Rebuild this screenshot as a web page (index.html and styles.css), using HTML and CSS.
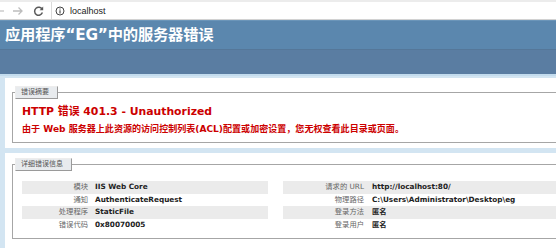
FILE: index.html
```html
<!DOCTYPE html>
<html lang="zh-CN">
<head>
<meta charset="utf-8">
<title>IIS 7.5 详细错误 - 401.3 - Unauthorized</title>
<link rel="stylesheet" href="styles.css">
</head>
<body>
<div class="page">
  <div class="chrome">
    <svg class="ico back" width="8" height="14" viewBox="0 0 8 14"><path d="M0 7h6" stroke="#c4c4c4" stroke-width="1.3" fill="none"/></svg>
    <svg class="ico fwd" width="12" height="14" viewBox="0 0 12 14"><path d="M1 7h9M6.5 3.5 10 7l-3.5 3.5" stroke="#bdbdbd" stroke-width="1.3" fill="none"/></svg>
    <svg class="ico reload" width="11" height="14" viewBox="0 0 11 14"><path d="M9.2 5.4A4 4 0 1 0 9.4 8.6" stroke="#5a5a5a" stroke-width="1.5" fill="none"/><path d="M10.2 2.6v3.6H6.6z" fill="#5a5a5a"/></svg>
    <div class="omnibox">
      <svg class="ico info" width="10" height="10" viewBox="0 0 10 10"><circle cx="5" cy="5" r="4" stroke="#444" stroke-width="1" fill="none"/><path d="M5 4.2v3.2M5 2.6v.9" stroke="#444" stroke-width="1.1"/></svg>
      <span class="url">localhost</span>
    </div>
  </div>

  <div class="header"><h1>应用程序“EG”中的服务器错误</h1></div>
  <div class="server-version"></div>

  <div class="content">
    <div class="container">
      <fieldset>
        <legend>错误摘要</legend>
        <h2>HTTP 错误 401.3 - Unauthorized</h2>
        <h3>由于 Web 服务器上此资源的访问控制列表(ACL)配置或加密设置，您无权查看此目录或页面。</h3>
      </fieldset>
    </div>
    <div class="container">
      <fieldset>
        <legend>详细错误信息</legend>
        <div class="details">
          <table class="left">
            <tr class="alt"><th>模块</th><td>IIS Web Core</td></tr>
            <tr><th>通知</th><td>AuthenticateRequest</td></tr>
            <tr class="alt"><th>处理程序</th><td>StaticFile</td></tr>
            <tr><th>错误代码</th><td>0x80070005</td></tr>
          </table>
          <table class="right">
            <tr class="alt"><th>请求的 URL</th><td>http://localhost:80/</td></tr>
            <tr><th>物理路径</th><td>C:\Users\Administrator\Desktop\eg</td></tr>
            <tr class="alt"><th>登录方法</th><td>匿名</td></tr>
            <tr><th>登录用户</th><td>匿名</td></tr>
          </table>
        </div>
      </fieldset>
    </div>
  </div>
</div>
</body>
</html>
```

FILE: styles.css
```css
html {
  background: #ffffff;
}
body {
  margin: 0;
  width: 556px;
  height: 248px;
  overflow: hidden;
  font-family: "DejaVu Sans", "Noto Sans CJK SC", sans-serif;
}
.page {
  background: #d3e5f2;
  height: 248px;
}

/* browser chrome */
.chrome {
  height: 17px;
  background: #ffffff;
  border-top: 2px solid #ececec;
  border-bottom: 1px solid #d2d2d2;
  display: flex;
  align-items: center;
}
.ico { display: block; flex: none; }
.back { margin-left: -2px; }
.fwd { margin-left: 6px; }
.reload { margin-left: 9px; }
.omnibox {
  margin-left: 7px;
  align-self: stretch;
  flex: 1;
  display: flex;
  align-items: center;
  border-left: 1px solid #dadada;
  padding-left: 3px;
}
.info { margin-right: 5px; }
.url {
  font-family: "Liberation Sans", Arial, sans-serif;
  font-size: 9px;
  color: #222;
}

/* header */
.header {
  height: 26px;
  padding: 2px 0 0 5px;
  background: #5b87ae;
  border-top: 1px solid #6b95b9;
}
.header h1 {
  margin: 0;
  font-size: 15.3px;
  line-height: 25px;
  font-weight: bold;
  color: #ffffff;
  font-family: "DejaVu Sans", "Noto Sans CJK SC", sans-serif;
  letter-spacing: -0.2px;
}
.server-version {
  height: 24px;
  background: #5a7da2;
  border-top: 1px solid #557799;
  border-bottom: 2px solid #c3dcee;
}

/* content */
.content {
  padding: 2px 0 0 5px;
  display: flex;
  flex-direction: column;
  gap: 5px;
}
.container {
  background: #ffffff;
  padding: 8px 0 5px 7px;
}
.container + .container {
  padding-top: 5px;
  height: 85px;
}
fieldset {
  margin: 0;
  border: 1px solid #a6a6a6;
  border-right: none;
  padding: 0 0 7px 9px;
}
legend {
  margin-left: -7px;
  padding: 0 8px 0 5px;
  height: 11px;
  line-height: 11px;
  font-size: 7px;
  color: #555;
  background: #e8ebee;
  border-top: 1px solid #ededed;
  border-left: 1px solid #ededed;
  border-right: 1px solid #9a9a9a;
  border-bottom: 1px solid #9a9a9a;
}
h2 {
  margin: 6px 0 0;
  font-size: 10.85px;
  line-height: 14px;
  color: #cc0000;
  font-weight: bold;
}
h3 {
  margin: 4px 0 0;
  font-size: 9.05px;
  line-height: 12px;
  color: #cc0000;
  font-weight: bold;
}

.details {
  display: grid;
  grid-template-columns: 246px 300px;
  column-gap: 15px;
  margin-top: 10px;
}
table {
  border-collapse: collapse;
  width: 100%;
}
th, td {
  padding: 0;
  height: 12.6px;
  font-size: 7.3px;
  line-height: 12px;
  vertical-align: middle;
  white-space: nowrap;
}
th {
  text-align: right;
  font-weight: normal;
  color: #666;
}
.left th { width: 66px; padding-right: 7px; }
.right th { width: 81px; padding-right: 8px; }
td {
  text-align: left;
  font-weight: bold;
  color: #222;
}
tr.alt th, tr.alt td {
  background: #ebebeb;
}
```
